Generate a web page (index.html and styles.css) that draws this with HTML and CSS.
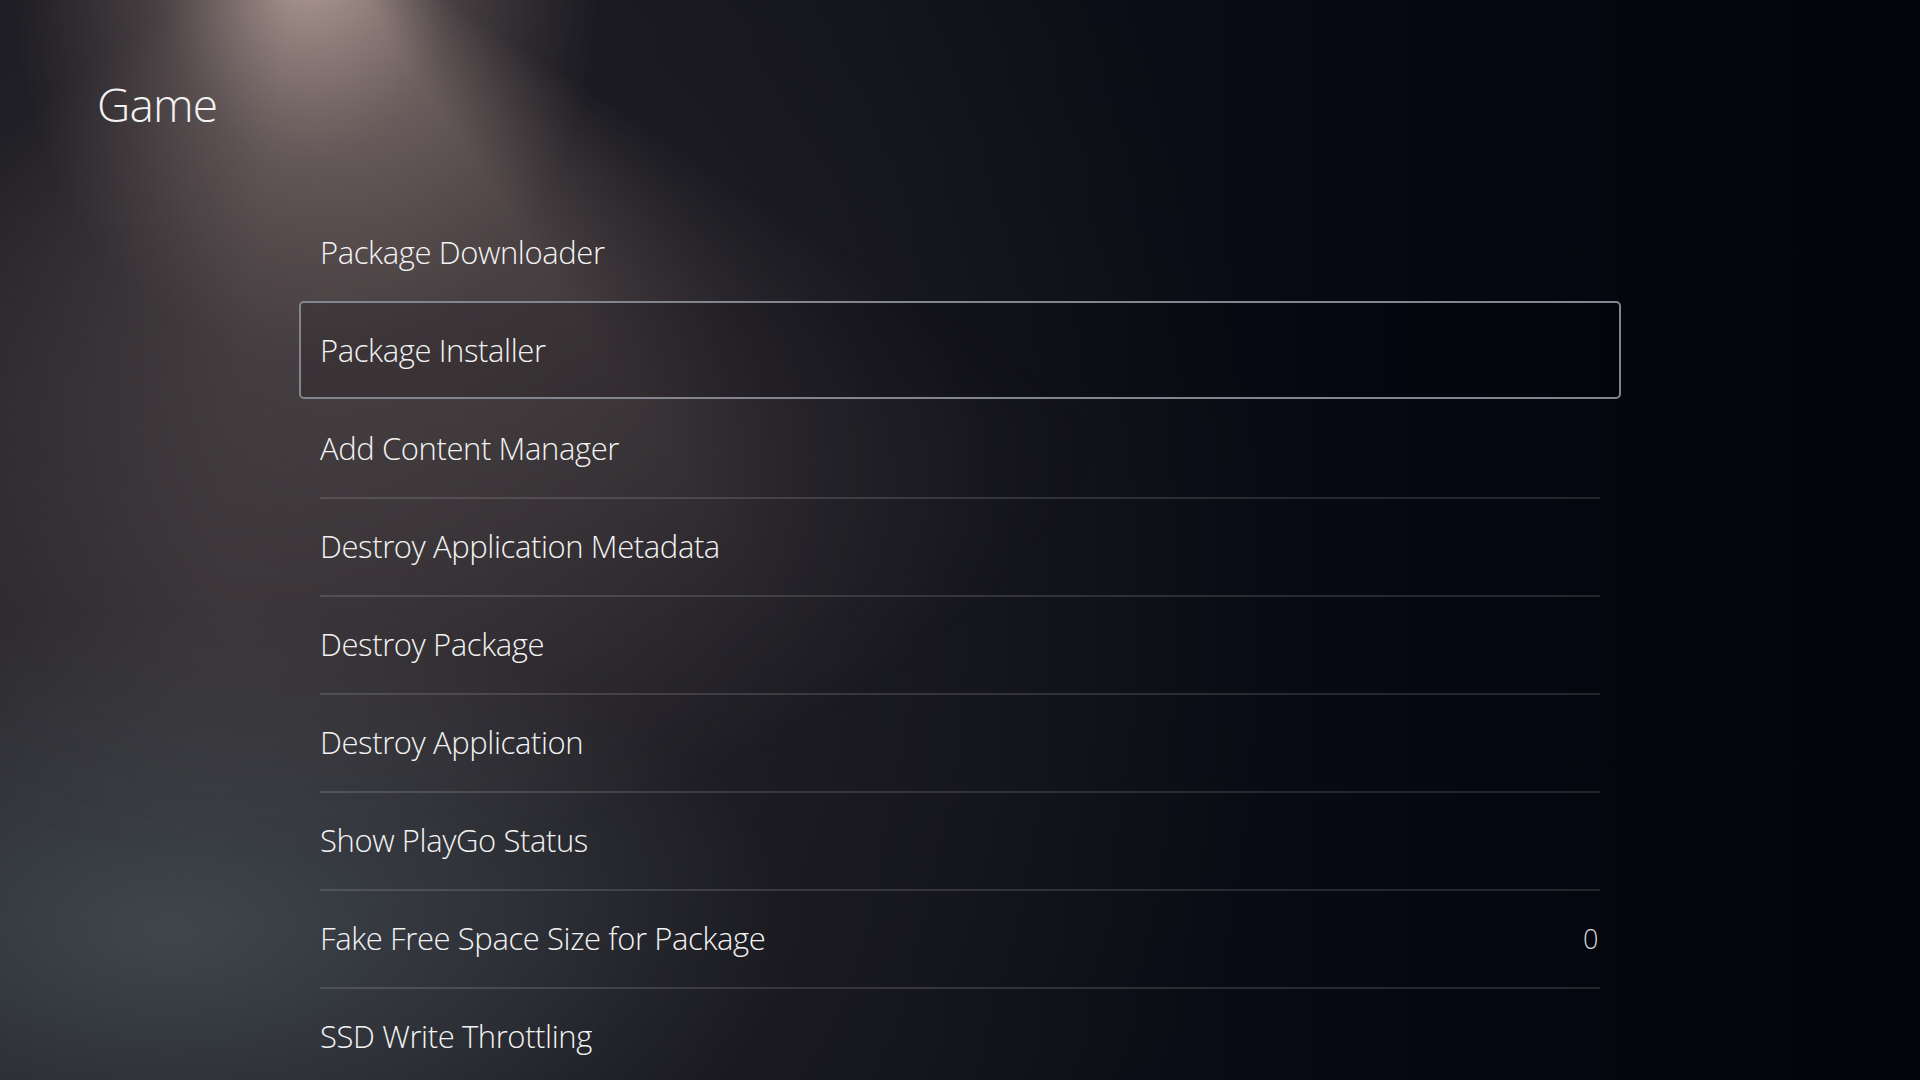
FILE: index.html
```html
<!DOCTYPE html>
<html lang="en">
<head>
<meta charset="utf-8">
<title>Game</title>
<link rel="stylesheet" href="styles.css">
</head>
<body>
<div class="screen">
  <h1 class="title">Game</h1>
  <ul class="menu">
    <li class="item">Package Downloader</li>
    <li class="item focused">Package Installer</li>
    <li class="item after-focus">Add Content Manager</li>
    <li class="item">Destroy Application Metadata</li>
    <li class="item">Destroy Package</li>
    <li class="item">Destroy Application</li>
    <li class="item">Show PlayGo Status</li>
    <li class="item"><span>Fake Free Space Size for Package</span><span class="value">0</span></li>
    <li class="item">SSD Write Throttling</li>
  </ul>
</div>
</body>
</html>
```
FILE: styles.css
```css
* { box-sizing: border-box; }
html, body { margin: 0; padding: 0; }
body {
  width: 1920px;
  height: 1080px;
  overflow: hidden;
  font-family: "Open Sans", "Noto Sans", sans-serif;
  color: #f2f2f2;
}
.screen {
  position: relative;
  width: 1920px;
  height: 1080px;
  overflow: hidden;
  padding: 72px 0 0 0;
  background:
    radial-gradient(ellipse 620px 320px at 170px 930px, rgba(80,95,101,0.58), rgba(80,95,101,0) 100%),
    radial-gradient(ellipse 1050px 1150px at 230px 600px, rgba(48,45,50,0.95), rgba(36,34,40,0.55) 55%, rgba(30,28,34,0) 100%),
    linear-gradient(90deg, #17171d 0, #101119 45%, #060710 75%, #03040b 100%);
}
.screen::before {
  content: "";
  position: absolute;
  inset: 0;
  background:
    radial-gradient(ellipse 300px 400px at 305px -40px, rgba(215,190,180,0.78), rgba(180,155,148,0.35) 50%, rgba(160,140,135,0) 100%),
    conic-gradient(from 122deg at 305px -90px, rgba(130,112,108,0) 0deg, rgba(140,120,115,0.66) 24deg, rgba(130,112,110,0.6) 66deg, rgba(110,98,100,0) 112deg, rgba(0,0,0,0) 360deg);
  -webkit-mask-image: radial-gradient(ellipse 1000px 950px at 305px -90px, #000 0, rgba(0,0,0,0.6) 40%, rgba(0,0,0,0) 100%);
  mask-image: radial-gradient(ellipse 1000px 950px at 305px -90px, #000 0, rgba(0,0,0,0.6) 40%, rgba(0,0,0,0) 100%);
}
.title, .menu { position: relative; z-index: 1; }
.title {
  margin: 0 0 0 97px;
  font-weight: 300;
  font-size: 46px;
  line-height: 64px;
  letter-spacing: -0.8px;
}
.menu {
  list-style: none;
  margin: 67px 0 0 299px;
  padding: 0;
  width: 1322px;
}
.item {
  position: relative;
  display: flex;
  align-items: center;
  justify-content: space-between;
  height: 98px;
  padding: 0 21px 0 19px;
  font-size: 31px;
  font-weight: 300;
  letter-spacing: -0.4px;
  border: 2px solid transparent;
  border-radius: 5px;
}
.item + .item::before {
  content: "";
  position: absolute;
  left: 19px;
  right: 19px;
  top: -2px;
  height: 2px;
  background: rgba(255,255,255,0.13);
}
.item.focused::before,
.item.after-focus::before { display: none; }
.item.focused {
  border-color: #82858e;
  background: rgba(2,3,10,0.15);
}
.value {
  font-size: 27px;
  color: #d8d8dc;
}
```
